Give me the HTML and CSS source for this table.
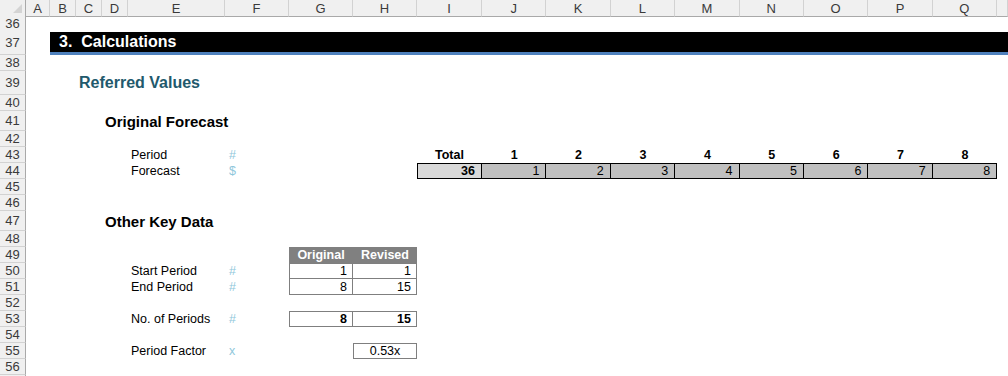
FILE: index.html
```html
<!DOCTYPE html>
<html>
<head>
<meta charset="utf-8">
<title>Calculations</title>
<link rel="stylesheet" href="styles.css">
</head>
<body>
<div class="sheet">
  <div class="row hdr">
    <div class="corner"><svg width="25" height="16" viewBox="0 0 25 16"><polygon points="22,4 22,13 13,13" fill="#d4d4d4"/></svg></div>
    <div class="ch">A</div><div class="ch">B</div><div class="ch">C</div><div class="ch">D</div><div class="ch">E</div>
    <div class="ch">F</div><div class="ch">G</div><div class="ch">H</div><div class="ch">I</div><div class="ch">J</div>
    <div class="ch">K</div><div class="ch">L</div><div class="ch">M</div><div class="ch">N</div><div class="ch">O</div>
    <div class="ch">P</div><div class="ch">Q</div><div class="ch"></div>
  </div>

  <div class="row h15"><div class="rn">36</div></div>
  <div class="row h24"><div class="rn">37</div><div class="bar">3.&nbsp; Calculations</div></div>
  <div class="row"><div class="rn">38</div></div>
  <div class="row h24"><div class="rn">39</div><div class="sub c-C">Referred Values</div></div>
  <div class="row"><div class="rn">40</div></div>
  <div class="row h20"><div class="rn">41</div><div class="sec c-D">Original Forecast</div></div>
  <div class="row"><div class="rn">42</div></div>
  <div class="row">
    <div class="rn">43</div>
    <div class="lbl c-E">Period</div><div class="unit">#</div>
    <div class="th c-I">Total</div>
    <div class="th">1</div><div class="th">2</div><div class="th">3</div><div class="th">4</div>
    <div class="th">5</div><div class="th">6</div><div class="th">7</div><div class="th">8</div>
  </div>
  <div class="row">
    <div class="rn">44</div>
    <div class="lbl c-E">Forecast</div><div class="unit">$</div>
    <div class="fc tot c-I">36</div>
    <div class="fc">1</div><div class="fc">2</div><div class="fc">3</div><div class="fc">4</div>
    <div class="fc">5</div><div class="fc">6</div><div class="fc">7</div><div class="fc">8</div>
  </div>
  <div class="row"><div class="rn">45</div></div>
  <div class="row"><div class="rn">46</div></div>
  <div class="row h20"><div class="rn">47</div><div class="sec c-D">Other Key Data</div></div>
  <div class="row"><div class="rn">48</div></div>
  <div class="row">
    <div class="rn">49</div>
    <div class="kh c-G">Original</div><div class="kh">Revised</div>
  </div>
  <div class="row">
    <div class="rn">50</div>
    <div class="lbl c-E">Start Period</div><div class="unit">#</div>
    <div class="kv">1</div><div class="kv nl">1</div>
  </div>
  <div class="row">
    <div class="rn">51</div>
    <div class="lbl c-E">End Period</div><div class="unit">#</div>
    <div class="kv nt">8</div><div class="kv nt nl">15</div>
  </div>
  <div class="row"><div class="rn">52</div></div>
  <div class="row">
    <div class="rn">53</div>
    <div class="lbl c-E">No. of Periods</div><div class="unit">#</div>
    <div class="kv b">8</div><div class="kv nl b">15</div>
  </div>
  <div class="row"><div class="rn">54</div></div>
  <div class="row">
    <div class="rn">55</div>
    <div class="lbl c-E">Period Factor</div><div class="unit">x</div>
    <div class="kv ctr c-H">0.53x</div>
  </div>
  <div class="row"><div class="rn">56</div></div>
  <div class="row"><div class="rn"></div></div>
</div>
</body>
</html>
```

FILE: styles.css
```css
* {
  box-sizing: border-box;
}

body {
  margin: 0;
  width: 1008px;
  height: 376px;
  overflow: hidden;
  background: #ffffff;
  font-family: "Liberation Sans", Arial, sans-serif;
  font-size: 12.5px;
  color: #000000;
}

.sheet {
  display: flex;
  flex-direction: column;
}

.row {
  display: grid;
  grid-template-columns: 26px 24px 26px 26px 26px 97px 64px 64px 64px 65px repeat(8, 64.4px) 1fr;
  height: 16px;
  white-space: nowrap;
}

.row > div {
  display: flex;
  align-items: center;
  height: 100%;
}

.h15 { height: 15px; }
.h20 { height: 20px; }
.h24 { height: 24px; }

/* headers */
.hdr { height: 16px; }

.corner {
  background: #f0f0f0;
  border-right: 1px solid #a9a9a9;
  border-bottom: 1px solid #a9a9a9;
}

.corner svg { display: block; }

.ch {
  justify-content: center;
  background: #f0f0f0;
  border-right: 1px solid #d2d2d2;
  border-bottom: 1px solid #a9a9a9;
  color: #3a3a3a;
  font-size: 13px;
}

.rn {
  grid-column-start: 1;
  justify-content: center;
  background: #f0f0f0;
  border-right: 1px solid #a9a9a9;
  border-bottom: 1px solid #d2d2d2;
  color: #3a3a3a;
  font-size: 13px;
}

/* column placement */
.c-C { grid-column-start: 4; }
.c-D { grid-column-start: 5; }
.c-E { grid-column-start: 6; }
.c-G { grid-column-start: 8; }
.c-H { grid-column-start: 9; }
.c-I { grid-column-start: 10; }

/* section bar */
.row > .bar {
  grid-column: 3 / -1;
  margin-top: 1px;
  height: calc(100% - 1px);
  background: #000000;
  border-bottom: 3px solid #4f81bd;
  color: #ffffff;
  font-weight: bold;
  font-size: 16px;
  padding-left: 9px;
}

.sub {
  color: #22596c;
  font-weight: bold;
  font-size: 16px;
  padding-left: 3px;
}

.sec {
  font-weight: bold;
  font-size: 15px;
  padding-left: 3px;
}

.lbl {
  padding-left: 3px;
}

.unit {
  padding-left: 4px;
  color: #8fc7db;
}

.th {
  justify-content: center;
  font-weight: bold;
}

/* forecast strip */
.fc {
  justify-content: flex-end;
  padding-right: 6px;
  background: #c0c0c0;
  border-top: 1px solid #000000;
  border-bottom: 1px solid #000000;
  border-right: 1px solid #000000;
}

.fc.tot {
  background: #d9d9d9;
  border-left: 1px solid #000000;
  font-weight: bold;
}

/* key data table */
.kh {
  justify-content: center;
  background: #808080;
  color: #ffffff;
  font-weight: bold;
}

.kv {
  justify-content: flex-end;
  padding-right: 5px;
  border: 1px solid #7f7f7f;
}

.kv.nl { border-left: none; }
.kv.nt { border-top: none; }
.kv.b { font-weight: bold; }
.kv.ctr { justify-content: center; padding-right: 0; }
```
